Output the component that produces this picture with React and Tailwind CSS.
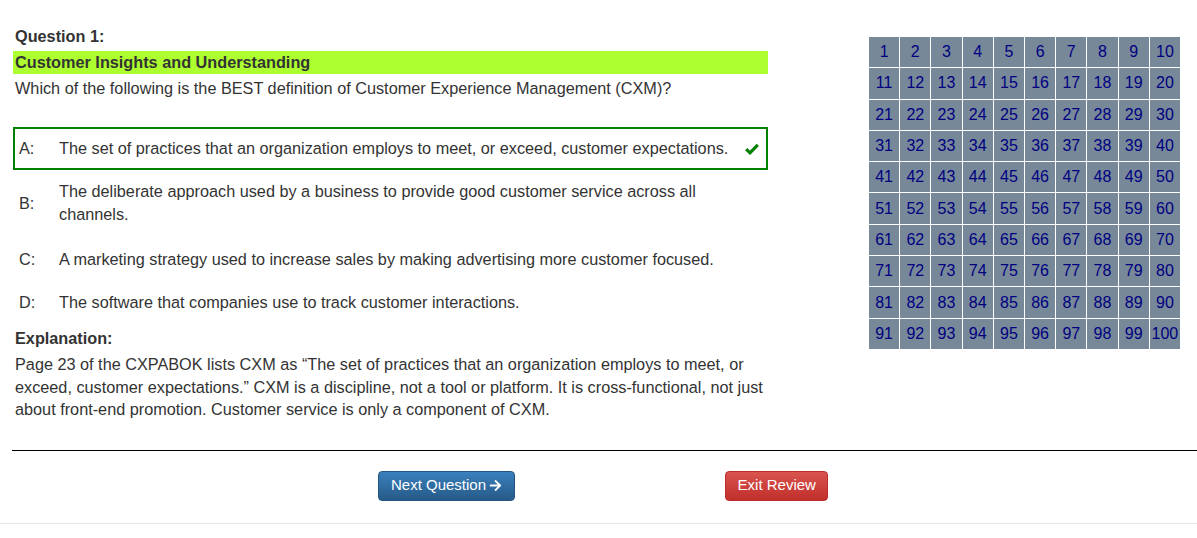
import React from "react";
import { FaArrowRight } from "react-icons/fa";

const options = [
  { l: "A:", t: "The set of practices that an organization employs to meet, or exceed, customer expectations.", correct: true },
  { l: "B:", t: "The deliberate approach used by a business to provide good customer service across all channels.", extra: true },
  { l: "C:", t: "A marketing strategy used to increase sales by making advertising more customer focused." },
  { l: "D:", t: "The software that companies use to track customer interactions." },
];

function Check() {
  return (
    <svg width="14" height="12" viewBox="0 0 14 12" className="block">
      <path d="M1.2 6.2 L5 9.8 L12.8 1.8" fill="none" stroke="#008000" strokeWidth="3.2" strokeLinejoin="miter" />
    </svg>
  );
}

export default function App() {
  const nums = Array.from({ length: 100 }, (_, i) => i + 1);
  return (
    <div className="w-[1197px] h-[538px] overflow-hidden bg-white text-[#333] text-[16.25px] font-['Liberation_Sans',Arial,sans-serif]">
      <div className="flex items-start">
        <div className="ml-[13px] w-[755px] pt-[25px]">
          <div className="font-bold leading-[23px] pl-[2px]">Question 1:</div>
          <div className="mt-[3px] bg-[#adff2f] font-bold leading-[23px] pl-[2px]">Customer Insights and Understanding</div>
          <div className="mt-[3px] leading-[23px] pl-[2px]">
            Which of the following is the BEST definition of Customer Experience Management (CXM)?
          </div>
          <div className="mt-[27px]">
            {options.map((o) => (
              <div
                key={o.l}
                className={`flex items-center border-2 pt-[8px] ${o.extra ? "pb-[10px]" : "pb-[8px]"} leading-[23px] ${o.correct ? "border-[#008000]" : "border-transparent"}`}
              >
                <div className="w-[44px] pl-[4px] shrink-0">{o.l}</div>
                <div className="flex-1">{o.t}</div>
                <div className="w-[21px] shrink-0 flex items-center">{o.correct ? <Check /> : null}</div>
              </div>
            ))}
          </div>
          <div className="mt-[3px] font-bold leading-[23px] pl-[2px]">Explanation:</div>
          <div className="mt-[3px] leading-[22.5px] pl-[2px]">
            Page 23 of the CXPABOK lists CXM as “The set of practices that an organization employs to meet, or exceed, customer expectations.” CXM is a discipline, not a tool or platform. It is cross-functional, not just about front-end promotion. Customer service is only a component of CXM.
          </div>
        </div>
        <div className="ml-[101px] mt-[37px] w-[311px] h-[312px] grid grid-cols-[repeat(10,1fr)] grid-rows-[repeat(10,1fr)] gap-px bg-white text-[16px]">
          {nums.map((n) => (
            <div key={n} className="bg-[#778899] text-[#000080] flex items-center justify-center leading-none">
              {n}
            </div>
          ))}
        </div>
      </div>
      <div className="ml-[12px] mt-[29px] h-px bg-black" />
      <div className="mt-[20px] flex pl-[378px]">
        <button className="h-[30px] px-[12px] rounded-[4px] border border-[#245580] bg-linear-to-b from-[#3a80bd] to-[#265a88] text-white text-[15px] flex items-center gap-[3px]">
          Next Question <FaArrowRight size={13} />
        </button>
        <button className="ml-[210px] h-[30px] px-[11.5px] rounded-[4px] border border-[#b92c28] bg-linear-to-b from-[#d9534f] to-[#c12e2a] text-white text-[15px] flex items-center">
          Exit Review
        </button>
      </div>
      <div className="mt-[22px] h-px bg-[#e5e5e5]" />
    </div>
  );
}
